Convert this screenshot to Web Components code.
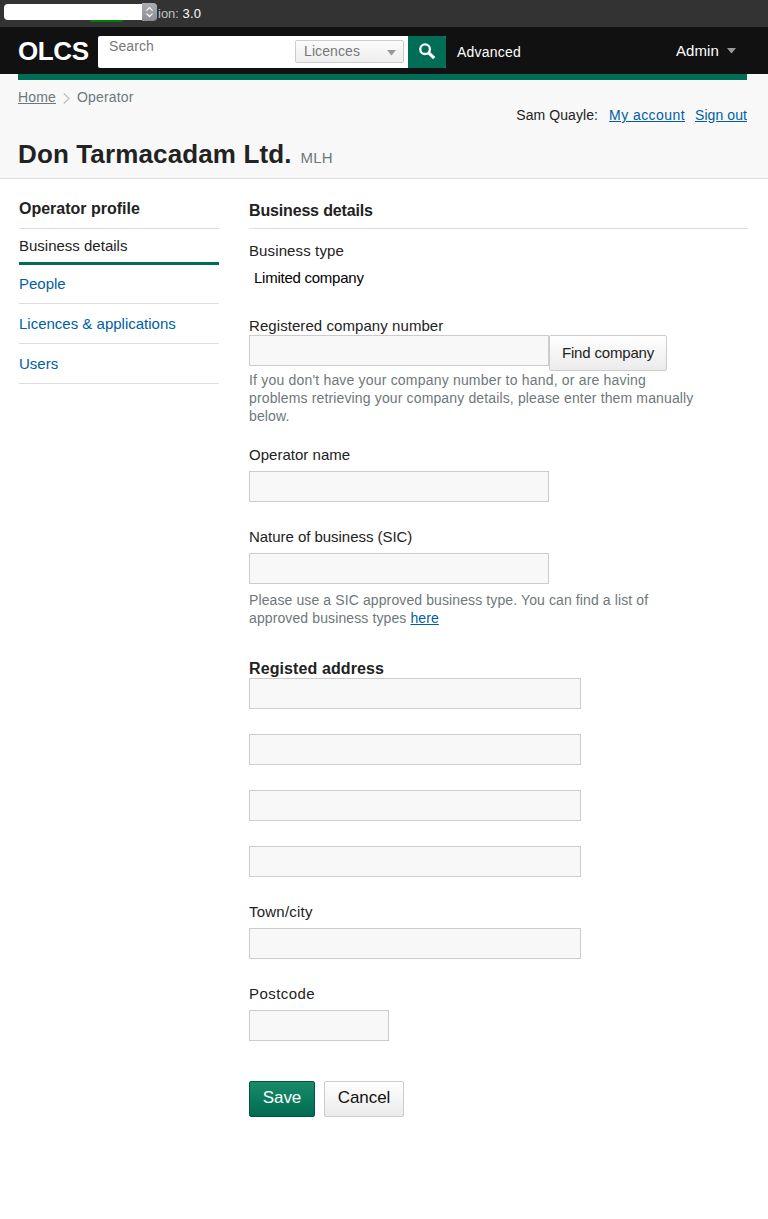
<!DOCTYPE html>
<html lang="en">
<head>
<meta charset="utf-8">
<title>OLCS - Don Tarmacadam Ltd.</title>
<style>
  body { margin: 0; background: #fff; color: #222; font: 15px/20px "Liberation Sans", Arial, sans-serif; }
</style>
</head>
<body>
<olcs-page></olcs-page>
<script>
const define = (name, html, setup) => {
  const template = document.createElement('template');
  template.innerHTML = html;
  customElements.define(name, class extends HTMLElement {
    connectedCallback() {
      if (this.shadowRoot) return;
      const root = this.attachShadow({ mode: 'open' });
      root.append(template.content.cloneNode(true));
      if (setup) setup(this, root);
    }
  });
};

define('version-bar', `
<style>
  :host { display: flex; position: relative; height: 27px; background: #333; color: #bfc1c3; font-size: 13px; line-height: 16px; }
  .select { position: relative; z-index: 1; display: flex; align-items: flex-start; width: 153px; height: 16px; margin: 4px 1px 0 4px; border-radius: 4px; background: #fff; justify-content: flex-end; }
  .steps { width: 15px; height: 18px; margin-top: -1px; border-radius: 0 4px 4px 0; background: linear-gradient(#acacb2, #8d8d93); }
  .steps svg { display: block; }
  .tag { position: absolute; left: 90px; top: 12px; width: 33px; height: 10px; border-radius: 2px; background: #008000; }
  .text { padding-top: 6px; white-space: pre; }
  b { font-weight: normal; color: #fff; letter-spacing: .15px; }
</style>
<i class="tag"></i>
<div class="select"><span class="steps"><svg width="15" height="18" viewBox="0 0 15 18" fill="none" stroke="#fff" stroke-width="1.2" stroke-linecap="round" stroke-linejoin="round"><path d="M4.8 7.4 7.5 4.7l2.7 2.7M4.8 10.8l2.7 2.7 2.7-2.7"/></svg></span></div>
<div class="text">ion: <b>3.0</b></div>`);

define('search-box', `
<style>
  :host { display: flex; height: 32px; width: 348px; border-radius: 2px; overflow: hidden; background: #fff; color: #777; font-size: 14px; }
  .q { flex: 1; padding-left: 11px; line-height: 20px; letter-spacing: .1px; }
  .scope { box-sizing: border-box; display: flex; align-items: center; justify-content: space-between; width: 109px; height: 23px; margin: 4px 4px 0 0; padding: 0 7px 0 8px; border: 1px solid #ccc; border-radius: 2px; background: linear-gradient(#fbfbfb, #eee); letter-spacing: .1px; line-height: 21px; }
  .scope svg { margin-top: 3px; }
  .go { width: 38px; background: #006e56; }
  .go svg { display: block; }
</style>
<div class="q">Search</div>
<div class="scope">Licences<svg width="9" height="6"><path d="M0 0h9L4.5 5.5z" fill="#999"/></svg></div>
<div class="go"><svg width="38" height="32" fill="none" stroke="#fff"><circle cx="17.1" cy="13.2" r="4.8" stroke-width="2.3"/><path d="M20.7 16.8 26.2 22.2" stroke-width="3.2"/></svg></div>`);

define('site-header', `
<style>
  :host { display: flex; height: 47px; background: #111; color: #fff; }
  .logo { width: 80px; padding-left: 18px; font: bold 26px/49px "Liberation Sans", Arial, sans-serif; letter-spacing: -.4px; }
  search-box { margin-top: 9px; }
  .adv { flex: 1; margin: 15px 0 0 11px; font-size: 14px; letter-spacing: .2px; }
  .admin { display: flex; align-items: center; gap: 8px; height: 20px; margin: 14px 32px 0 0; letter-spacing: .1px; }
</style>
<div class="logo">OLCS</div>
<search-box></search-box>
<div class="adv">Advanced</div>
<div class="admin">Admin<svg width="9" height="6"><path d="M0 0h9L4.5 5.5z" fill="#999"/></svg></div>`);

define('page-masthead', `
<style>
  :host { display: block; box-sizing: border-box; height: 105px; padding: 0 21px 0 18px; background: #f8f8f8; border-bottom: 1px solid #dcdedf; font-size: 14px; }
  .rule { height: 6px; background: #006e56; }
  .row { display: flex; justify-content: space-between; height: 57px; color: #6f777b; line-height: 18px; }
  .crumbs { display: flex; padding-top: 8px; }
  .crumbs svg { margin: 5px 7px 0 7px; }
  a { color: #005ea5; text-decoration: underline; }
  .crumbs a { color: #6f777b; letter-spacing: .16px; }
  .crumbs span { letter-spacing: .15px; }
  .user { display: flex; padding-top: 26px; color: #222; letter-spacing: .08px; }
  .user a:first-of-type { margin: 0 10px 0 11px; letter-spacing: .43px; }
  .title { display: flex; align-items: baseline; gap: 9px; line-height: 34px; }
  h1 { margin: 0; font-size: 26px; line-height: 34px; letter-spacing: .13px; }
  .title span { font-size: 15px; color: #6f777b; letter-spacing: .1px; }
</style>
<div class="rule"></div>
<div class="row">
  <div class="crumbs"><a>Home</a><svg width="7" height="11" fill="none" stroke="#bfc1c3" stroke-width="1.3"><path d="M.8.5 6 5.5.8 10.5"/></svg><span>Operator</span></div>
  <div class="user"><span>Sam Quayle:</span><a>My account</a><a>Sign out</a></div>
</div>
<div class="title"><h1>Don Tarmacadam Ltd.</h1><span>MLH</span></div>`);

define('side-nav', `
<style>
  :host { display: block; width: 200px; color: #005ea5; }
  h2 { box-sizing: border-box; height: 50px; margin: 0; padding-top: 20px; border-bottom: 1px solid #dcdedf; color: #222; font-size: 16px; line-height: 20px; }
</style>
<h2>Operator profile</h2><slot></slot>`);

define('nav-item', `
<style>
  :host { display: block; box-sizing: border-box; height: 40px; padding-top: 10px; border-bottom: 1px solid #dcdedf; }
  :host([first]) { height: 39px; padding-top: 9px; }
  :host([current]) { height: 36px; padding-top: 7px; border-bottom: 3px solid #006e56; color: #222; }
</style><slot></slot>`);

define('text-field', `
<style>
  :host { display: block; }
  .label { height: 26px; line-height: 20px; }
  :host([tight]) .label { height: 19px; }
  .line { display: flex; align-items: flex-start; }
  .box { box-sizing: border-box; height: 31px; border: 1px solid #ccc; background: #f8f8f8; }
</style>
<div class="label"></div>
<div class="line"><div class="box"></div><slot></slot></div>`,
(host, root) => {
  const label = root.querySelector('.label');
  if (host.hasAttribute('label')) label.textContent = host.getAttribute('label');
  else label.remove();
  root.querySelector('.box').style.width = host.getAttribute('width') + 'px';
});

define('field-hint', `
<style>
  :host { display: block; color: #6f777b; font-size: 14px; line-height: 18px; letter-spacing: .14px; white-space: nowrap; }
  ::slotted(a) { color: #005ea5; text-decoration: underline; }
</style><slot></slot>`);

define('push-button', `
<style>
  :host { display: block; box-sizing: border-box; height: 36px; border: 1px solid #ccc; border-radius: 2px; background: linear-gradient(#fff, #ebebeb); color: #111; text-align: center; font-size: 17px; line-height: 32px; letter-spacing: -.08px; }
  :host([primary]) { border-color: #00563f; background: linear-gradient(#1a8b69, #006b52); color: #fff; }
  :host([small]) { font-size: 15px; line-height: 33px; letter-spacing: -.18px; color: #222; }
</style><slot></slot>`);

define('olcs-page', `
<style>
  :host { display: block; min-height: 1219px; }
  main { display: flex; gap: 30px; padding: 0 20px 0 19px; }
  form { flex: 1; }
  h2 { box-sizing: border-box; height: 50px; margin: 0 0 12px; padding-top: 22px; border-bottom: 1px solid #dcdedf; font-size: 16px; line-height: 20px; letter-spacing: -.16px; }
  h3 { margin: 32px 0 0; height: 19px; font-size: 16px; line-height: 20px; letter-spacing: .1px; }
  .label { letter-spacing: .12px; }
  .value { padding: 7px 0 28px 5px; color: #000; letter-spacing: -.25px; }
  .gap { margin-top: 25px; }
  .actions { display: flex; gap: 9px; margin-top: 40px; }
</style>
<version-bar></version-bar>
<site-header></site-header>
<page-masthead></page-masthead>
<main>
  <side-nav>
    <nav-item current>Business details</nav-item>
    <nav-item first>People</nav-item>
    <nav-item>Licences &amp; applications</nav-item>
    <nav-item>Users</nav-item>
  </side-nav>
  <form>
    <h2>Business details</h2>
    <div class="label">Business type</div>
    <div class="value">Limited company</div>
    <text-field tight label="Registered company number" width="300" style="letter-spacing:.07px"><push-button small style="width:118px">Find company</push-button></text-field>
    <field-hint><span style="letter-spacing:.19px">If you don't have your company number to hand, or are having</span><br>problems retrieving your company details, please enter them manually<br>below.</field-hint>
    <text-field label="Operator name" width="300" style="margin-top:20px;letter-spacing:.02px"></text-field>
    <text-field class="gap" label="Nature of business (SIC)" width="300" style="letter-spacing:-.04px"></text-field>
    <field-hint style="margin-top:7px;letter-spacing:.11px">Please use a SIC approved business type. You can find a list of<br>approved business types <a>here</a></field-hint>
    <h3>Registed address</h3>
    <text-field width="332"></text-field>
    <text-field class="gap" width="332"></text-field>
    <text-field class="gap" width="332"></text-field>
    <text-field class="gap" width="332"></text-field>
    <text-field class="gap" label="Town/city" width="332" style="letter-spacing:.22px"></text-field>
    <text-field class="gap" label="Postcode" width="140" style="letter-spacing:.45px"></text-field>
    <div class="actions">
      <push-button primary style="width:66px">Save</push-button>
      <push-button style="width:80px">Cancel</push-button>
    </div>
  </form>
</main>`);
</script>
</body>
</html>
